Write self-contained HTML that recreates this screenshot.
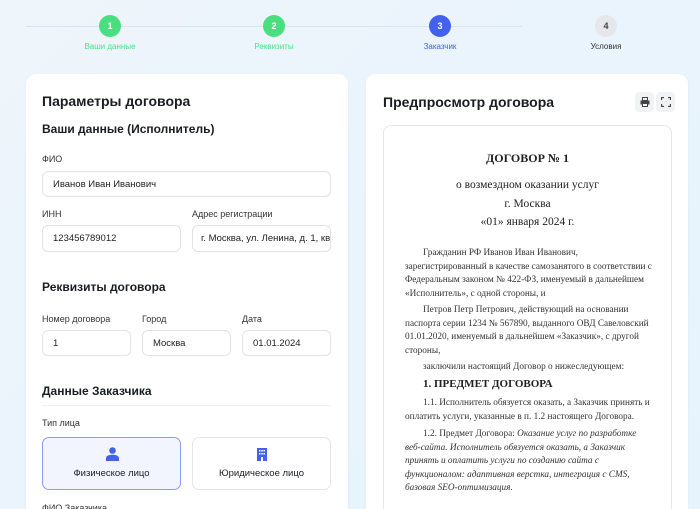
<!DOCTYPE html>
<html style="overflow:hidden;height:509px"><head><meta charset="utf-8"><style>
*{box-sizing:border-box;margin:0;padding:0}
body{width:700px;height:509px;overflow:hidden;background:linear-gradient(135deg,#eef5fb,#e6f3fd);font-family:"Liberation Sans",sans-serif;color:#1a1d23;position:relative}
.abs{position:absolute}
.line{position:absolute;top:26px;height:1px;background:#dde3ea}
.c{position:absolute;top:15px;width:22px;height:22px;border-radius:50%;color:#fff;font-size:9px;font-weight:bold;text-align:center;line-height:22px}
.sl{position:absolute;top:42px;font-size:8px;width:120px;text-align:center}
.card{position:absolute;top:74px;background:#fff;border-radius:10px;height:450px;box-shadow:0 1px 3px rgba(0,0,0,.04)}
.h1{position:absolute;font-size:14px;font-weight:bold}
.h2{position:absolute;font-size:12px;font-weight:bold}
.lb{position:absolute;font-size:9px;color:#333}
.in{position:absolute;border:1px solid #dfe3e8;border-radius:6px;font-size:9.5px;padding-left:10px;display:flex;align-items:center;overflow:hidden;white-space:nowrap;color:#222}
.btn{position:absolute;top:437px;width:139px;height:53px;border-radius:7px;font-size:9.5px;text-align:center}
.doc{position:absolute;left:383px;top:125px;width:289px;height:400px;border:1px solid #e3e6ea;border-radius:8px;font-family:"Liberation Serif",serif;color:#222}
.p{position:absolute;left:21px;width:249px;font-size:9.25px;line-height:13.6px;text-indent:18px;color:#333}
.ib{position:absolute;top:92px;width:19px;height:20px;background:#f1f2f4;border-radius:4px}
</style></head><body>
<div class="line" style="left:26px;width:496px"></div>
<div class="c" style="left:99px;background:#4ade80">1</div>
<div class="c" style="left:263px;background:#4ade80">2</div>
<div class="c" style="left:429px;background:#4361ee">3</div>
<div class="c" style="left:595px;background:#e5e7eb;color:#444">4</div>
<div class="sl" style="left:50px;color:#4ade80">Ваши данные</div>
<div class="sl" style="left:214px;color:#4ade80">Реквизиты</div>
<div class="sl" style="left:380px;color:#4361ee">Заказчик</div>
<div class="sl" style="left:546px;color:#333">Условия</div>

<div class="card" style="left:26px;width:322px"></div>
<div class="h1" style="left:42px;top:93px">Параметры договора</div>
<div class="h2" style="left:42px;top:122px">Ваши данные (Исполнитель)</div>
<div class="lb" style="left:42px;top:154px">ФИО</div>
<div class="in" style="left:42px;top:171px;width:289px;height:26px">Иванов Иван Иванович</div>
<div class="lb" style="left:42px;top:209px">ИНН</div>
<div class="lb" style="left:192px;top:209px">Адрес регистрации</div>
<div class="in" style="left:42px;top:225px;width:139px;height:27px">123456789012</div>
<div class="in" style="left:192px;top:225px;width:139px;height:27px;padding-left:8px">г. Москва, ул. Ленина, д. 1, кв</div>
<div class="h2" style="left:42px;top:280px">Реквизиты договора</div>
<div class="lb" style="left:42px;top:314px">Номер договора</div>
<div class="lb" style="left:142px;top:314px">Город</div>
<div class="lb" style="left:242px;top:314px">Дата</div>
<div class="in" style="left:42px;top:330px;width:89px;height:26px">1</div>
<div class="in" style="left:142px;top:330px;width:89px;height:26px">Москва</div>
<div class="in" style="left:242px;top:330px;width:89px;height:26px">01.01.2024</div>
<div class="h2" style="left:42px;top:384px">Данные Заказчика</div>
<div class="abs" style="left:42px;top:405px;width:289px;height:1px;background:#f0f1f3"></div>
<div class="lb" style="left:42px;top:418px">Тип лица</div>
<div class="btn" style="left:42px;background:#f3f5fe;border:1px solid #8b9cf3">
<svg class="abs" style="left:63px;top:9px" width="13" height="14" viewBox="0 0 13 14"><circle cx="6.5" cy="3.5" r="3.3" fill="#4361ee"/><path d="M0 14v-2.5C0 9 2.5 7.8 6.5 7.8S13 9 13 11.5V14Z" fill="#4361ee"/></svg>
<div class="abs" style="left:0;width:137px;top:30px">Физическое лицо</div></div>
<div class="btn" style="left:192px;background:#fff;border:1px solid #e3e6ea">
<svg class="abs" style="left:64px;top:10px" width="10" height="13" viewBox="0 0 10 13"><rect width="10" height="13" fill="#4361ee"/><g fill="#fff"><rect x="2" y="2" width="1.5" height="1.5"/><rect x="4.3" y="2" width="1.5" height="1.5"/><rect x="6.5" y="2" width="1.5" height="1.5"/><rect x="2" y="5" width="1.5" height="1.5"/><rect x="4.3" y="5" width="1.5" height="1.5"/><rect x="6.5" y="5" width="1.5" height="1.5"/><rect x="4" y="9" width="2" height="4"/></g></svg>
<div class="abs" style="left:0;width:137px;top:30px">Юридическое лицо</div></div>
<div class="lb" style="left:42px;top:503px">ФИО Заказчика</div>

<div class="card" style="left:366px;width:322px"></div>
<div class="h1" style="left:383px;top:94px">Предпросмотр договора</div>
<div class="ib" style="left:635px"><svg class="abs" style="left:5px;top:5px" width="10" height="10" viewBox="0 0 10 10"><rect x="2.5" y="0.5" width="5" height="3" fill="none" stroke="#444" stroke-width="1"/><rect x="0.5" y="3.5" width="9" height="4" fill="#444"/><rect x="2.5" y="6.5" width="5" height="3" fill="#fff" stroke="#444"/></svg></div>
<div class="ib" style="left:656px"><svg class="abs" style="left:5px;top:5px" width="10" height="10" viewBox="0 0 10 10" fill="none" stroke="#444" stroke-width="1.2"><path d="M0.5 3V0.5H3M7 0.5h2.5V3M9.5 7v2.5H7M3 9.5H0.5V7"/></svg></div>
<div class="doc">
<div class="abs" style="left:0;width:287px;top:25px;text-align:center;font-weight:bold;font-size:12px">ДОГОВОР № 1</div>
<div class="abs" style="left:0;width:287px;top:50px;text-align:center;font-size:11.5px;line-height:18.7px">о возмездном оказании услуг<br>г. Москва<br>«01» января 2024 г.</div>
<div class="p" style="top:121px">Гражданин РФ Иванов Иван Иванович, зарегистрированный в качестве самозанятого в соответствии с Федеральным законом № 422-ФЗ, именуемый в дальнейшем «Исполнитель», с одной стороны, и</div>
<div class="p" style="top:178px">Петров Петр Петрович, действующий на основании паспорта серии 1234 № 567890, выданного ОВД Савеловский 01.01.2020, именуемый в дальнейшем «Заказчик», с другой стороны,</div>
<div class="p" style="top:235px">заключили настоящий Договор о нижеследующем:</div>
<div class="abs" style="left:39px;top:252px;font-weight:bold;font-size:11px">1. ПРЕДМЕТ ДОГОВОРА</div>
<div class="p" style="top:271px">1.1. Исполнитель обязуется оказать, а Заказчик принять и оплатить услуги, указанные в п. 1.2 настоящего Договора.</div>
<div class="p" style="top:302px">1.2. Предмет Договора: <i>Оказание услуг по разработке веб-сайта. Исполнитель обязуется оказать, а Заказчик принять и оплатить услуги по созданию сайта с функционалом: адаптивная верстка, интеграция с CMS, базовая SEO-оптимизация.</i></div>
</div>
</body></html>
